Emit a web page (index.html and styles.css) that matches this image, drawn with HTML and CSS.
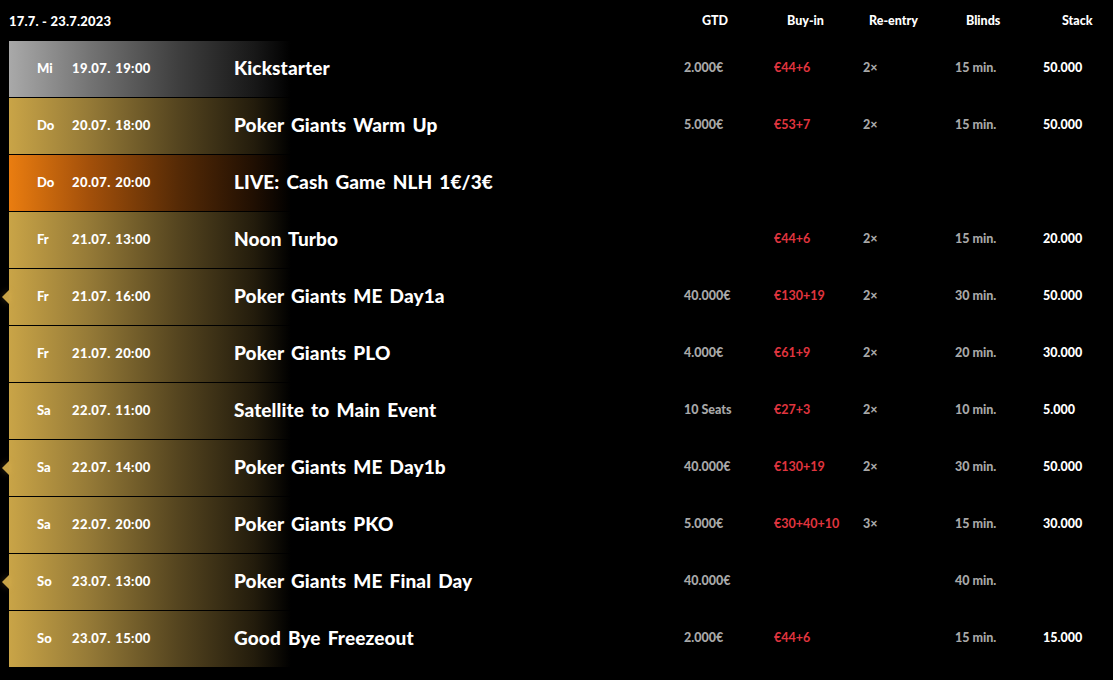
FILE: index.html
```html
<!DOCTYPE html>
<html lang="de">
<head>
<meta charset="utf-8">
<link rel="stylesheet" href="styles.css">
</head>
<body>
<div class="schedule">
  <div class="head">
    <div class="range">17.7. - 23.7.2023</div>
    <div class="h h-gtd">GTD</div>
    <div class="h h-buy">Buy-in</div>
    <div class="h h-re">Re-entry</div>
    <div class="h h-bl">Blinds</div>
    <div class="h h-st">Stack</div>
  </div>
  <div class="rows">
    <div class="row grey"><span class="day">Mi</span><span class="date">19.07. 19:00</span><span class="title">Kickstarter</span><span class="gtd">2.000€</span><span class="buy">€44+6</span><span class="re">2×</span><span class="bl">15 min.</span><span class="st">50.000</span></div>
    <div class="row"><span class="day">Do</span><span class="date">20.07. 18:00</span><span class="title">Poker Giants Warm Up</span><span class="gtd">5.000€</span><span class="buy">€53+7</span><span class="re">2×</span><span class="bl">15 min.</span><span class="st">50.000</span></div>
    <div class="row orange"><span class="day">Do</span><span class="date">20.07. 20:00</span><span class="title">LIVE: Cash Game NLH 1€/3€</span><span class="gtd"></span><span class="buy"></span><span class="re"></span><span class="bl"></span><span class="st"></span></div>
    <div class="row"><span class="day">Fr</span><span class="date">21.07. 13:00</span><span class="title">Noon Turbo</span><span class="gtd"></span><span class="buy">€44+6</span><span class="re">2×</span><span class="bl">15 min.</span><span class="st">20.000</span></div>
    <div class="row main"><span class="day">Fr</span><span class="date">21.07. 16:00</span><span class="title">Poker Giants ME Day1a</span><span class="gtd">40.000€</span><span class="buy">€130+19</span><span class="re">2×</span><span class="bl">30 min.</span><span class="st">50.000</span></div>
    <div class="row"><span class="day">Fr</span><span class="date">21.07. 20:00</span><span class="title">Poker Giants PLO</span><span class="gtd">4.000€</span><span class="buy">€61+9</span><span class="re">2×</span><span class="bl">20 min.</span><span class="st">30.000</span></div>
    <div class="row"><span class="day">Sa</span><span class="date">22.07. 11:00</span><span class="title">Satellite to Main Event</span><span class="gtd">10 Seats</span><span class="buy">€27+3</span><span class="re">2×</span><span class="bl">10 min.</span><span class="st">5.000</span></div>
    <div class="row main"><span class="day">Sa</span><span class="date">22.07. 14:00</span><span class="title">Poker Giants ME Day1b</span><span class="gtd">40.000€</span><span class="buy">€130+19</span><span class="re">2×</span><span class="bl">30 min.</span><span class="st">50.000</span></div>
    <div class="row"><span class="day">Sa</span><span class="date">22.07. 20:00</span><span class="title">Poker Giants PKO</span><span class="gtd">5.000€</span><span class="buy">€30+40+10</span><span class="re">3×</span><span class="bl">15 min.</span><span class="st">30.000</span></div>
    <div class="row main"><span class="day">So</span><span class="date">23.07. 13:00</span><span class="title">Poker Giants ME Final Day</span><span class="gtd">40.000€</span><span class="buy"></span><span class="re"></span><span class="bl">40 min.</span><span class="st"></span></div>
    <div class="row"><span class="day">So</span><span class="date">23.07. 15:00</span><span class="title">Good Bye Freezeout</span><span class="gtd">2.000€</span><span class="buy">€44+6</span><span class="re"></span><span class="bl">15 min.</span><span class="st">15.000</span></div>
  </div>
</div>
</body>
</html>
```
FILE: styles.css
```css
html, body {
  margin: 0;
  padding: 0;
  background: #000;
}
body {
  font-family: "Lato", "DejaVu Sans", sans-serif;
  font-weight: 900;
  color: #fff;
}
.schedule {
  padding-left: 9px;
}
.head,
.row {
  display: grid;
  align-items: center;
}
.head {
  height: 41px;
  grid-template-columns: 63px 162px 450px 90px 89px 92px 88px 1fr;
  font-size: 12.5px;
}
.range {
  grid-column: 1 / 4;
  font-size: 13px;
  letter-spacing: 0.2px;
}
.h-gtd { padding-left: 18px; }
.h-buy { padding-left: 13px; }
.h-re { padding-left: 6px; }
.h-bl { padding-left: 11px; }
.h-st { padding-left: 19px; }
.rows {
  display: flex;
  flex-direction: column;
  gap: 1px;
}
.row {
  position: relative;
  height: 56px;
  padding-left: 28px;
  grid-template-columns: 35px 162px 450px 90px 89px 92px 88px 1fr;
  background: linear-gradient(90deg, #c9a447 0px, #957a37 80px, #54441f 170px, #231c0c 245px, #000 282px);
  font-size: 12.5px;
  line-height: 1;
}
.row > span {
  padding-bottom: 1px;
}
.row > .title {
  padding-bottom: 4px;
}
.row.grey {
  background: linear-gradient(90deg, #a9a9a9 0px, #747474 80px, #3e3e3e 170px, #181818 245px, #000 282px);
}
.row.orange {
  background: linear-gradient(90deg, #ea7d10 0px, #a3500a 80px, #552a06 170px, #200f02 245px, #000 282px);
}
.row.main::before {
  content: "";
  position: absolute;
  left: -7px;
  top: 21px;
  width: 0;
  height: 0;
  border-top: 7px solid transparent;
  border-bottom: 7px solid transparent;
  border-right: 7px solid #c9a447;
  filter: drop-shadow(0 0 3px rgba(255, 200, 90, 0.25));
}
.day {
  font-size: 13px;
}
.date {
  font-size: 13px;
  letter-spacing: 0.4px;
  word-spacing: 1px;
}
.title {
  font-size: 19px;
  letter-spacing: 0.1px;
  word-spacing: 2.5px;
}
.gtd,
.re,
.bl {
  color: #a8a8a8;
}
.buy {
  color: #e0353f;
  font-weight: 700;
}
.st {
  color: #fff;
}
```
